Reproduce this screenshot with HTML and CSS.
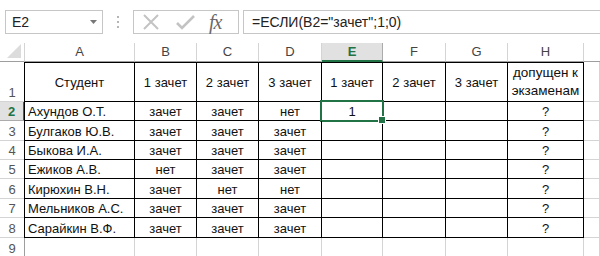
FILE: index.html
```html
<!DOCTYPE html>
<html>
<head>
<meta charset="utf-8">
<link rel="stylesheet" href="styles.css">
</head>
<body>
<div class="app">
  <div class="toolbar">
    <div class="namebox"><span>E2</span><svg class="dd" width="7" height="4" viewBox="0 0 7 4"><path d="M0 0H7L3.5 4Z" fill="#777"/></svg></div>
    <div class="dots"><i></i><i></i><i></i></div>
    <div class="fbtns">
      <svg width="18" height="16" viewBox="0 0 18 16"><path d="M2 1L16 15M16 1L2 15" stroke="#c3c3c3" stroke-width="2" fill="none"/></svg>
      <svg width="20" height="16" viewBox="0 0 20 16"><path d="M2 9L7 14L19 2" stroke="#c3c3c3" stroke-width="2.6" fill="none"/></svg>
      <span class="fx">fx</span>
    </div>
    <div class="formula">=ЕСЛИ(B2="зачет";1;0)</div>
  </div>
  <div class="sheet">
    <div class="corner"><svg width="14" height="14" viewBox="0 0 14 14"><path d="M14 0V14H0Z" fill="#dcdcdc"/></svg></div>
    <div class="ch">A</div><div class="ch">B</div><div class="ch">C</div><div class="ch">D</div><div class="ch sel">E</div><div class="ch">F</div><div class="ch">G</div><div class="ch">H</div><div class="ch last"></div>

    <div class="rh r1">1</div>
    <div class="c t1 first hd">Студент</div><div class="c t1 hd">1 зачет</div><div class="c t1 hd">2 зачет</div><div class="c t1 hd">3 зачет</div><div class="c t1 hd">1 зачет</div><div class="c t1 hd">2 зачет</div><div class="c t1 hd">3 зачет</div><div class="c t1 hd wrap">допущен к экзаменам</div><div class="g"></div>

    <div class="rh rsel">2</div>
    <div class="c first l">Ахундов О.Т.</div><div class="c">зачет</div><div class="c">зачет</div><div class="c">нет</div><div class="c active">1</div><div class="c"></div><div class="c"></div><div class="c">?</div><div class="g"></div>

    <div class="rh">3</div>
    <div class="c first l">Булгаков Ю.В.</div><div class="c">зачет</div><div class="c">зачет</div><div class="c">зачет</div><div class="c"></div><div class="c"></div><div class="c"></div><div class="c">?</div><div class="g"></div>

    <div class="rh">4</div>
    <div class="c first l">Быкова И.А.</div><div class="c">зачет</div><div class="c">зачет</div><div class="c">зачет</div><div class="c"></div><div class="c"></div><div class="c"></div><div class="c">?</div><div class="g"></div>

    <div class="rh">5</div>
    <div class="c first l">Ежиков А.В.</div><div class="c">нет</div><div class="c">зачет</div><div class="c">зачет</div><div class="c"></div><div class="c"></div><div class="c"></div><div class="c">?</div><div class="g"></div>

    <div class="rh">6</div>
    <div class="c first l">Кирюхин В.Н.</div><div class="c">зачет</div><div class="c">нет</div><div class="c">нет</div><div class="c"></div><div class="c"></div><div class="c"></div><div class="c">?</div><div class="g"></div>

    <div class="rh">7</div>
    <div class="c first l">Мельников А.С.</div><div class="c">зачет</div><div class="c">зачет</div><div class="c">зачет</div><div class="c"></div><div class="c"></div><div class="c"></div><div class="c">?</div><div class="g"></div>

    <div class="rh">8</div>
    <div class="c first l">Сарайкин В.Ф.</div><div class="c">зачет</div><div class="c">зачет</div><div class="c">зачет</div><div class="c"></div><div class="c"></div><div class="c"></div><div class="c">?</div><div class="g"></div>

    <div class="rh">9</div>
    <div class="g"></div><div class="g"></div><div class="g"></div><div class="g"></div><div class="g"></div><div class="g"></div><div class="g"></div><div class="g"></div><div class="g"></div>
  </div>
</div>
</body>
</html>
```

FILE: styles.css
```css
* { box-sizing: border-box; }
body {
  margin: 0;
  background: #fff;
  font-family: "Liberation Sans", Arial, sans-serif;
  overflow: hidden;
}
.app { width: 600px; height: 256px; overflow: hidden; }

.toolbar {
  height: 43px;
  display: flex;
  align-items: flex-start;
  padding-top: 10px;
  padding-left: 5px;
}
.namebox {
  width: 98px;
  height: 24px;
  border: 1px solid #c6c6c6;
  display: flex;
  align-items: center;
  justify-content: space-between;
  padding: 0 5px 0 6px;
  font-size: 14px;
  color: #222;
}
.dots {
  width: 30px;
  height: 24px;
  display: flex;
  flex-direction: column;
  align-items: center;
  justify-content: center;
  gap: 3px;
}
.dots i { width: 2px; height: 2px; background: #b5b5b5; display: block; }
.fbtns {
  width: 106px;
  height: 24px;
  border: 1px solid #c6c6c6;
  display: flex;
  align-items: center;
  padding-left: 8px;
  gap: 15px;
}
.fx {
  font-family: "Liberation Serif", "Times New Roman", serif;
  font-style: italic;
  font-size: 20px;
  color: #6a6a6a;
  letter-spacing: -1px;
  margin-left: -1px;
}
.formula {
  margin-left: 4px;
  flex: 1;
  height: 24px;
  border: 1px solid #c6c6c6;
  border-right: none;
  padding-left: 8px;
  font-size: 14px;
  color: #222;
  line-height: 22px;
}

.sheet {
  display: grid;
  grid-template-columns: 25px 110px 62px 62px 63px 61px 63px 62px 76px 1fr;
  grid-template-rows: 19px 40px 19px 20px 19px 19px 20px 19px 20px 20px;
  font-size: 13px;
  color: #111;
}
.corner {
  border-right: 1px solid #d4d4d4;
  border-bottom: 1px solid #9e9e9e;
  display: flex;
  align-items: flex-end;
  justify-content: flex-end;
  padding: 0 3px 3px 0;
}
.ch {
  border-right: 1px solid #d4d4d4;
  border-bottom: 1px solid #9e9e9e;
  text-align: center;
  font-size: 13px;
  color: #444;
  line-height: 18px;
}
.ch.last { border-right: none; }
.ch.sel {
  background: #e1e1e1;
  color: #217346;
  font-weight: bold;
  border-bottom: 2px solid #217346;
  border-right-color: #ababab;
}
.rh {
  border-right: 1px solid #9e9e9e;
  border-bottom: 1px solid #d4d4d4;
  text-align: center;
  font-size: 13px;
  color: #555;
  display: flex;
  align-items: flex-end;
  justify-content: center;
  padding-bottom: 1px;
}
.rh.rsel {
  background: #e1e1e1;
  color: #217346;
  font-weight: bold;
  border-right: 2px solid #217346;
  border-bottom-color: #ababab;
}
.c {
  border-right: 1px solid #000;
  border-bottom: 1px solid #000;
  display: flex;
  align-items: flex-end;
  justify-content: center;
  padding-bottom: 1px;
  white-space: nowrap;
  position: relative;
}
.c.first { border-left: 1px solid #000; margin-left: -1px; }
.c.l { justify-content: flex-start; padding-left: 3px; }
.c.t1 { border-top: 1px solid #000; }
.c.hd { align-items: center; padding-bottom: 0; }
.c.wrap { white-space: normal; text-align: center; line-height: 18px; font-size: 13.5px; }
.g {
  border-right: 1px solid #d4d4d4;
  border-bottom: 1px solid #d4d4d4;
}
.active::after {
  content: "";
  position: absolute;
  left: -2px;
  top: -2px;
  right: -2px;
  bottom: -2px;
  border: 2px solid #217346;
}
.active::before {
  content: "";
  position: absolute;
  right: -4px;
  bottom: -4px;
  width: 6px;
  height: 6px;
  background: #217346;
  border: 1px solid #fff;
  z-index: 2;
}
```
